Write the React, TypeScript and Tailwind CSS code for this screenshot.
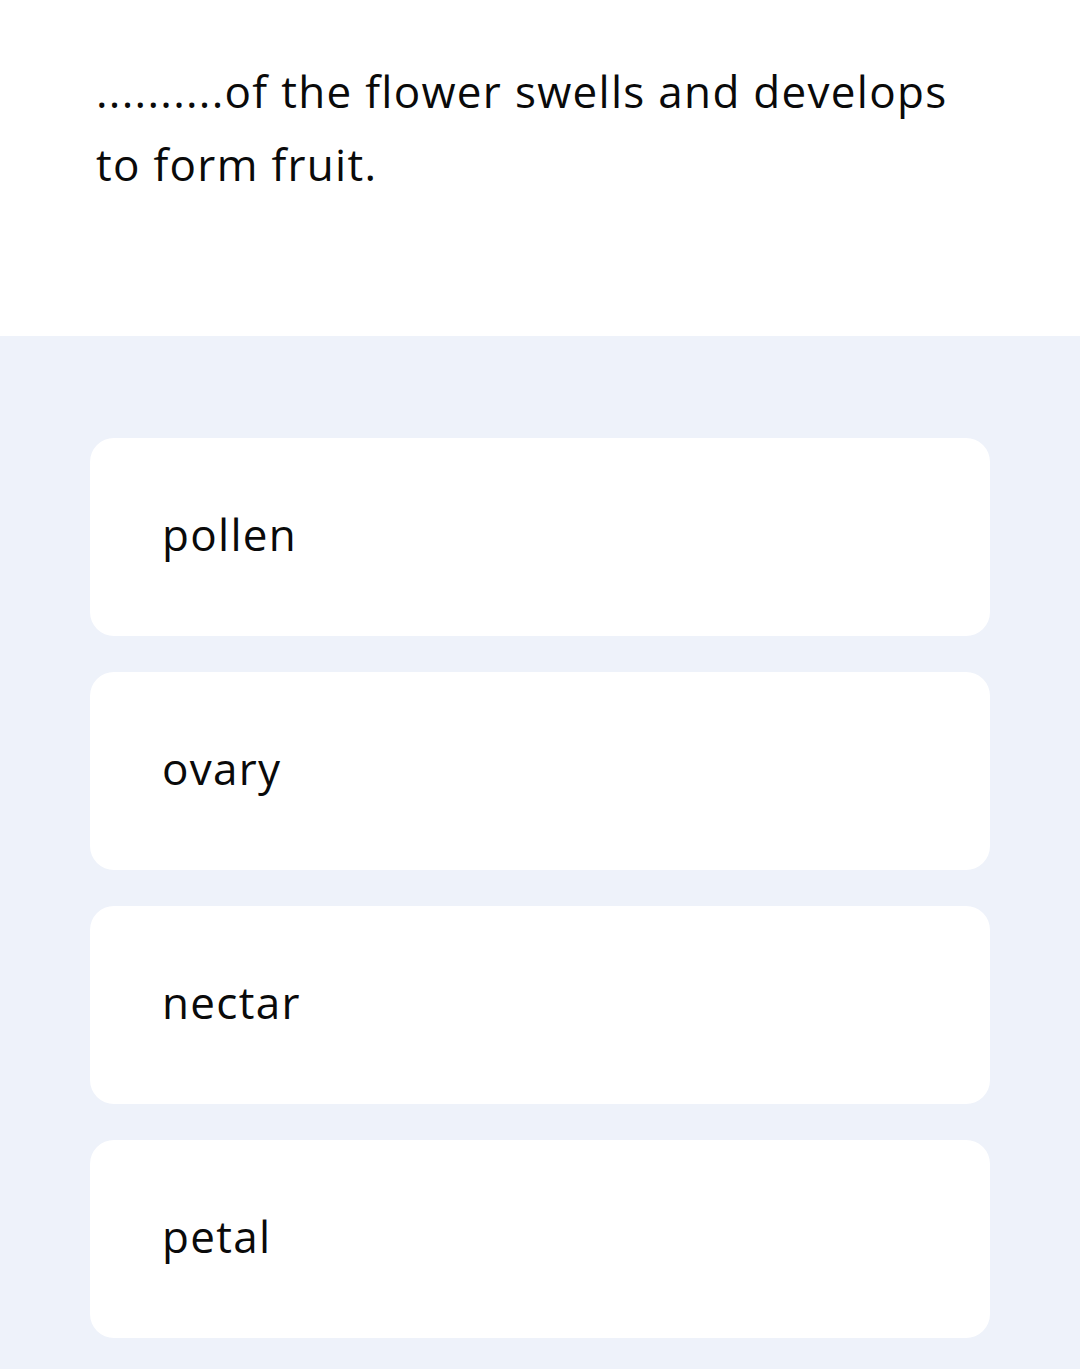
export default function App() {
  const options = ["pollen", "ovary", "nectar", "petal"];
  return (
    <div className="min-h-[1369px] bg-[#eef2fa]" style={{ fontFamily: "'Open Sans', 'Noto Sans', sans-serif" }}>
      <div className="bg-white h-[336px] pl-[96px] pr-[100px] pt-[55px]">
        <p className="text-[44px] leading-[73px] tracking-[1.3px] text-[#0a0a0a]">..........of the flower swells and develops to form fruit.</p>
      </div>
      <div className="px-[90px] pt-[102px] flex flex-col gap-[36px]">
        {options.map((o) => (
          <div key={o} className="bg-white rounded-[24px] h-[198px] flex items-center pl-[72px]">
            <span className="text-[44px] tracking-[1.3px] text-[#0a0a0a] -mt-[6px]">{o}</span>
          </div>
        ))}
      </div>
    </div>
  );
}
